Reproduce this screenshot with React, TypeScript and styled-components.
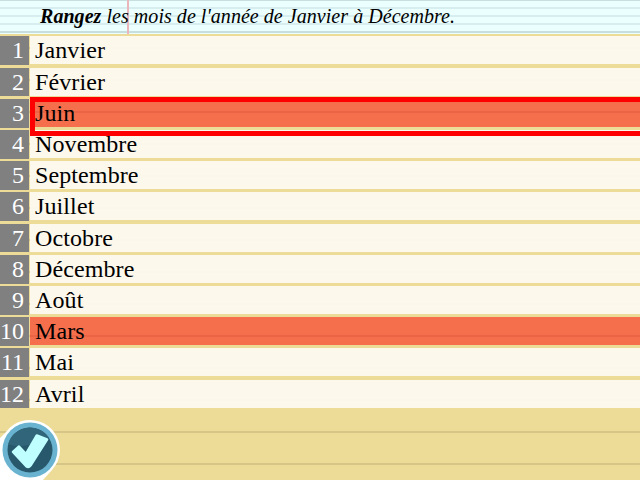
import React from 'react';
import styled, { createGlobalStyle } from 'styled-components';

const Global = createGlobalStyle`
  * { box-sizing: border-box; }
  html, body { margin: 0; padding: 0; background: #eddc98; }
  body { width: 640px; height: 480px; overflow: hidden; }
`;

const Page = styled.main`
  position: relative;
  display: flex;
  flex-direction: column;
  width: 640px;
  height: 480px;
  overflow: hidden;
  color: #000;
  font-family: 'Liberation Serif', 'Times New Roman', serif;
  background: repeating-linear-gradient(
    to bottom,
    #eddc98 0,
    #eddc98 15px,
    #d5c688 15px,
    #d5c688 17px,
    #eddc98 17px,
    #eddc98 32px
  );
`;

const Header = styled.header`
  flex: none;
  height: 34px;
  margin-bottom: 2px;
  padding: 4px 0 0 40px;
  font-size: 20px;
  line-height: 24px;
  font-style: italic;
  letter-spacing: 0.045px;
  white-space: nowrap;
  background:
    linear-gradient(#eab6bb, #eab6bb) 127px 0 / 2px 34px no-repeat,
    linear-gradient(#c8dfe0, #c8dfe0) 0 0 / 100% 1px no-repeat,
    linear-gradient(#c8dfe0, #c8dfe0) 0 31px / 100% 2px no-repeat,
    linear-gradient(#d7eef1, #d7eef1) 0 7px / 100% 2px no-repeat,
    linear-gradient(#d7eef1, #d7eef1) 0 15px / 100% 2px no-repeat,
    linear-gradient(#d7eef1, #d7eef1) 0 23px / 100% 2px no-repeat,
    #ebffff;
`;

const List = styled.ol`
  display: grid;
  grid-template-rows: 32px 31px 31px 31px 31px 32px 31px 31px 31px 31px 32px 28px;
  flex: none;
  margin: 0;
  padding: 0;
  list-style: none;
`;

const Row = styled.li<{ $framed?: boolean }>`
  position: relative;
  display: grid;
  grid-template-columns: 29px 1fr;
  column-gap: 1px;
  align-items: start;
  font-size: 24px;
  line-height: 28px;
  z-index: ${({ $framed }) => ($framed ? 1 : 0)};
`;

const Rank = styled.span<{ $height: number }>`
  height: ${({ $height }) => $height}px;
  padding-right: 5px;
  display: flex;
  justify-content: flex-end;
  color: #fff;
  background: #808080;
`;

const Label = styled.span<{ $wrong?: boolean }>`
  height: 28px;
  padding-left: 5px;
  letter-spacing: 0.11px;
  background: ${({ $wrong }) => ($wrong ? 'rgba(255, 2, 2, 0.5)' : 'rgba(254, 250, 241, 0.94)')};
`;

const SelectionFrame = styled.div`
  position: absolute;
  top: -2px;
  left: 30px;
  right: -6px;
  height: 39px;
  border: 5px solid #f00;
`;

const Confirm = styled.button`
  position: absolute;
  left: 0;
  bottom: 0;
  width: 62px;
  height: 62px;
  padding: 0;
  border: 0;
  background: none;
  svg { display: block; }
`;

const months = [
  'Janvier', 'Février', 'Juin', 'Novembre', 'Septembre', 'Juillet',
  'Octobre', 'Décembre', 'Août', 'Mars', 'Mai', 'Avril',
];
const misplaced = ['Juin', 'Mars'];
const selected = 'Juin';
const shortRanks = [2, 7, 12];

function CheckIcon() {
  return (
    <svg width="62" height="62" viewBox="0 0 62 62" aria-hidden="true">
      <path d="M0 20V62H43L52 52Q60 43 60 32A30 30 0 0 0 6 14Z" fill="#fff" />
      <circle cx="30" cy="32" r="27.5" fill="#69b3d0" />
      <circle cx="30" cy="32" r="22.5" fill="#28586c" />
      <path d="M8.2 26A22.5 22.5 0 0 1 50 22Q40 22 34 25Q21 31 8.2 26Z" fill="#31667a" />
      <path
        d="M13 34L19 28.5L26 36L36.8 17.5L47 21.5L30.5 47.5Q28.5 50 26 48Z"
        fill="#bfffff"
        stroke="#bfffff"
        strokeWidth="2.5"
        strokeLinejoin="round"
      />
    </svg>
  );
}

export default function App() {
  return (
    <>
      <Global />
      <Page>
        <Header>
          <strong>Rangez</strong> les mois de l'année de Janvier à Décembre.
        </Header>
        <List>
          {months.map((month, i) => (
            <Row key={month} $framed={month === selected}>
              <Rank $height={shortRanks.includes(i + 1) ? 28 : 29}>{i + 1}</Rank>
              <Label $wrong={misplaced.includes(month)}>{month}</Label>
              {month === selected && <SelectionFrame />}
            </Row>
          ))}
        </List>
        <Confirm aria-label="Valider">
          <CheckIcon />
        </Confirm>
      </Page>
    </>
  );
}
